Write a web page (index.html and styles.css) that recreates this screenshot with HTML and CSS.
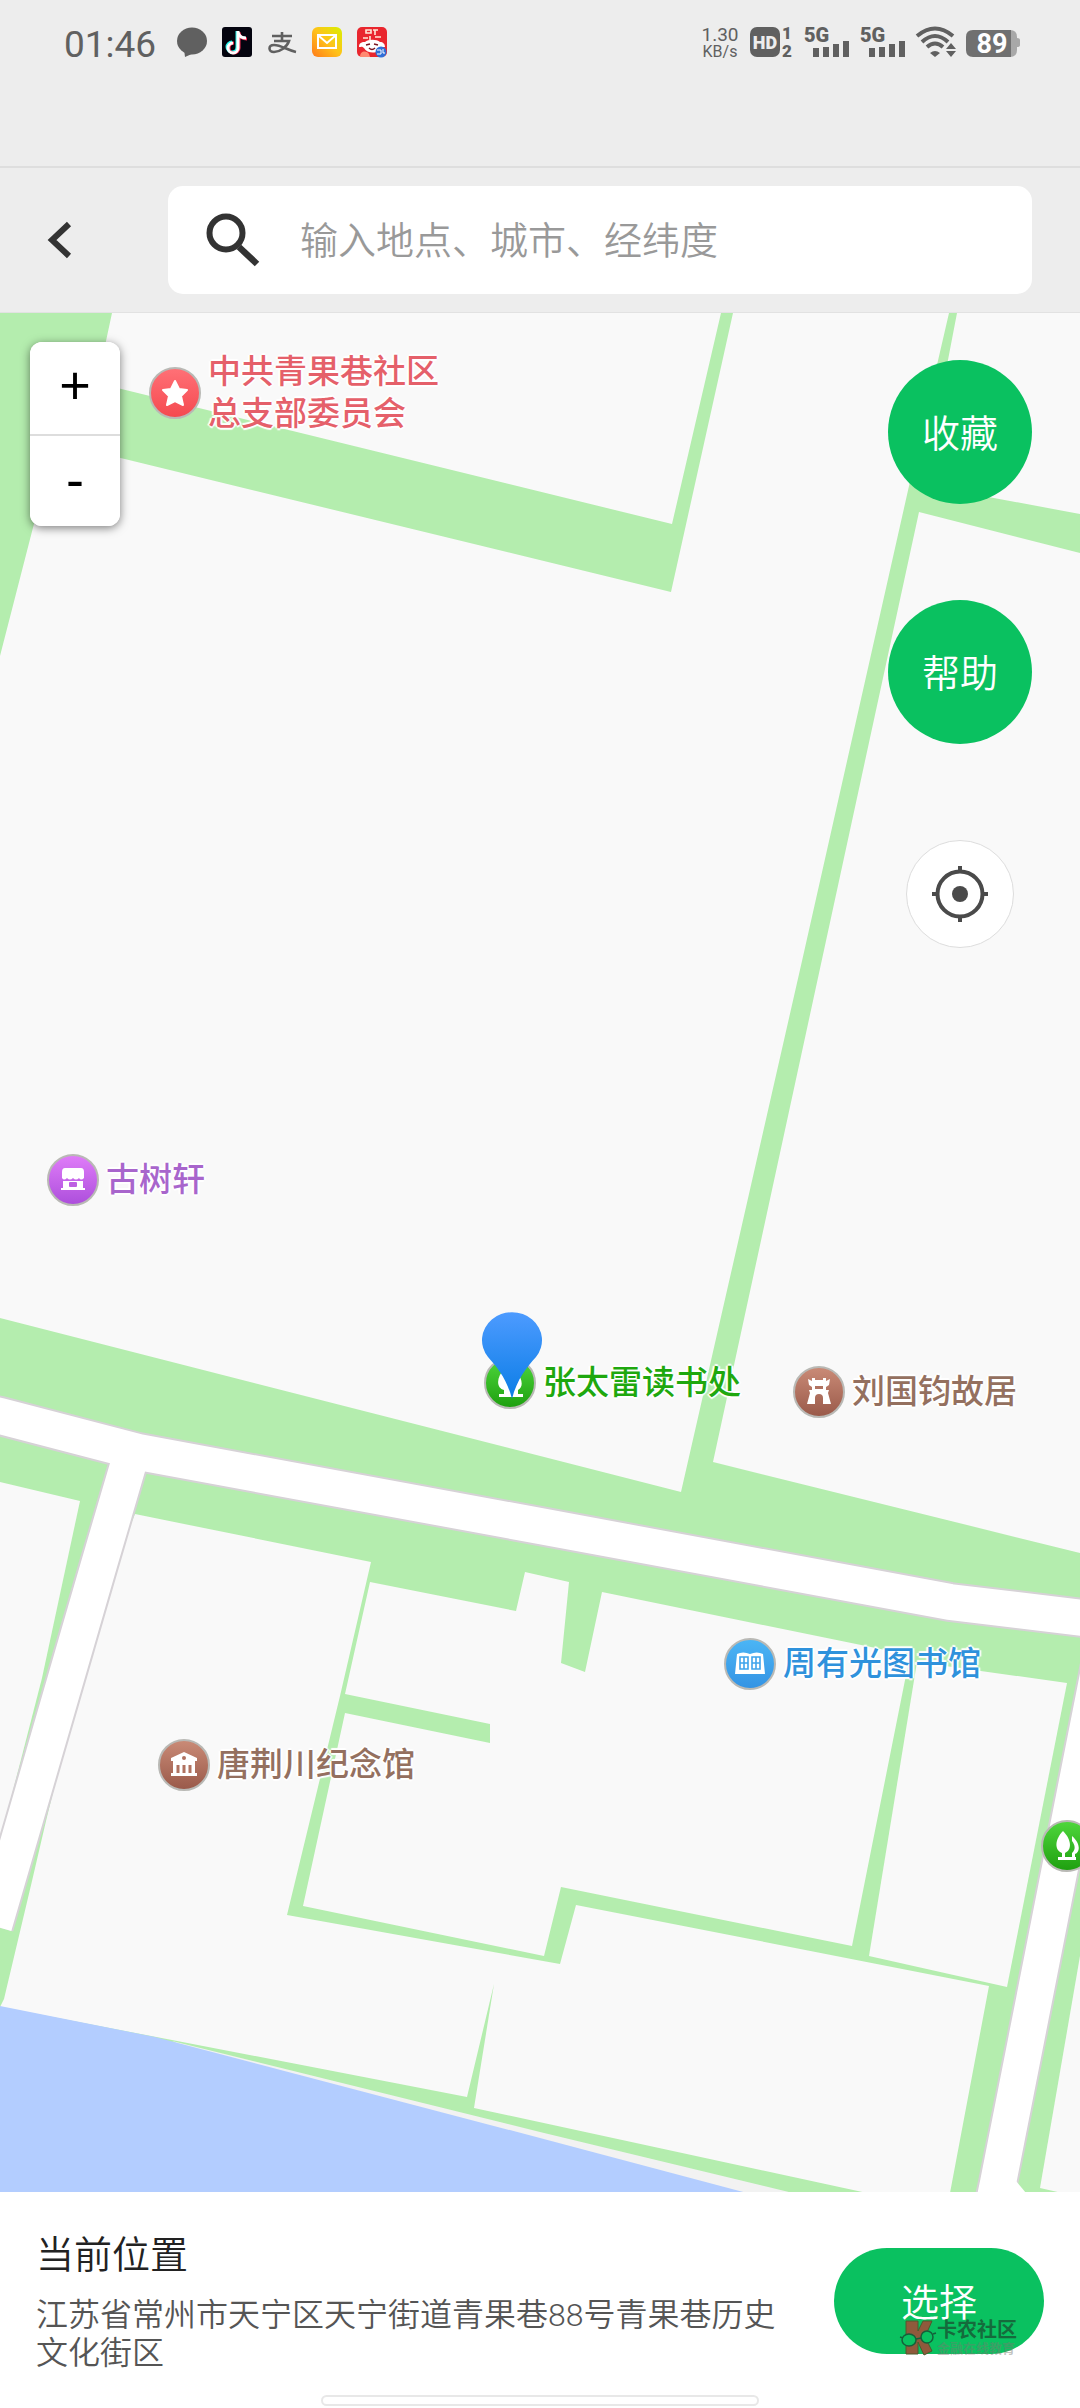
FILE: index.html
```html
<!DOCTYPE html>
<html lang="zh-CN">
<head>
    <meta charset="UTF-8">
    <meta name="viewport" content="width=device-width, initial-scale=1.0">
    <title>选择位置</title>
    <link rel="stylesheet" href="styles.css">
</head>
<body>
    <div class="status-bar">
        <span class="time">01:46</span>
        <div class="app-icons">
            <svg width="30" height="30" viewBox="0 0 30 30">
                <ellipse cx="15" cy="14" rx="15" ry="13.5" fill="#606060"/>
                <path d="M7 22l1 8 9-4z" fill="#606060"/>
            </svg>
            <svg width="30" height="30" viewBox="0 0 30 30">
                <rect width="30" height="30" rx="3" fill="#04040f"/>
                <g fill="none" stroke-width="3">
                    <path d="M15 4v16a5 5 0 1 1-5-5M15 5c1 4 4 6 8 6" stroke="#25f4ee"/>
                    <path d="M17 5v16a5 5 0 1 1-5-5M17 6c1 4 4 6 8 6" stroke="#fe2c55"/>
                    <path d="M16 4v17a5 5 0 1 1-5-5M16 5c1 4 4 6 8 6" stroke="#fff"/>
                </g>
            </svg>
            <svg width="30" height="30" viewBox="0 0 30 30">
                <path d="M5 9h20M15 5v9M7 14h15c-2 6-9 11-15 11-6 0-6-7 0-7 7 0 13 5 22 7" fill="none" stroke="#606060" stroke-width="2.6"/>
            </svg>
            <svg width="30" height="30" viewBox="0 0 30 30">
                <defs>
                    <linearGradient id="mail" x1="1" y1="0" x2="0" y2="1">
                        <stop offset="0" stop-color="#d8f000"/>
                        <stop offset=".5" stop-color="#ffc21a"/>
                        <stop offset="1" stop-color="#ff7a1a"/>
                    </linearGradient>
                </defs>
                <rect width="30" height="30" rx="6" fill="url(#mail)"/>
                <path d="M6 8h18v13H6zM7 9l8 7 8-7" fill="none" stroke="#fff" stroke-width="2"/>
            </svg>
            <svg width="30" height="30" viewBox="0 0 30 30">
                <rect width="30" height="30" rx="5" fill="#e9262e"/>
                <path d="M9 3h5v3H9zM16 3h5M18 3v5M6 11h5M13 9v4M18 10h6" stroke="#ffe9d8" stroke-width="1.6" fill="none"/>
                <path d="M2 20c0-5 4-5 6-5 3-3 12-3 15 0 3 0 5 2 5 5-3 0-3 0-4 1-2 6-14 6-17 0-2-2-3-1-5-1z" fill="#fff"/>
                <path d="M9 18l4-1M17 17l4 1M12 21q3 3 6 0" stroke="#7a1520" stroke-width="1.4" fill="none"/>
                <path d="M3 30c0-6 6-7 9-3l1 3z" fill="#ff8a72"/>
                <circle cx="24" cy="25" r="5.5" fill="#2f6fd8"/>
                <path d="M20 23h4v4h-4M26 22v4h2" stroke="#fff" stroke-width="1" fill="none"/>
            </svg>
        </div>
        <div class="system-icons">
            <div class="speed"><span class="speed-value">1.30</span><span class="speed-unit">KB/s</span></div>
            <svg width="44" height="30" viewBox="0 0 44 30">
                <rect width="30" height="30" rx="7" fill="#606060"/>
                <text class="hd" x="15" y="22">HD</text>
                <text class="sim" x="37" y="12">1</text>
                <text class="sim" x="37" y="30">2</text>
            </svg>
            <svg width="46" height="30" viewBox="0 0 46 30">
                <text class="net" x="0" y="15">5G</text>
                <path d="M12 21v9M22 20v10M32 17v13M42 14v16" stroke="#606060" stroke-width="6"/>
            </svg>
            <svg width="46" height="30" viewBox="0 0 46 30">
                <text class="net" x="0" y="15">5G</text>
                <path d="M12 21v9M22 20v10M32 17v13M42 14v16" stroke="#606060" stroke-width="6"/>
            </svg>
            <svg width="40" height="30" viewBox="0 0 40 30">
                <path d="M1 9Q19-6 37 9M6 15Q19 3 32 15M11 20Q19 13 27 20" fill="none" stroke="#606060" stroke-width="4"/>
                <path d="M14 26q5-4 10 0l-5 4zM35 16l5 6H30zM35 30l5-6H30z" fill="#606060"/>
            </svg>
            <svg width="54" height="30" viewBox="0 0 54 30">
                <path d="M40 3h4q7 0 7 7v1q3 0 3 2v5q0 2-3 2v3q0 7-7 7h-4z" fill="#a8a8a8"/>
                <path d="M7 3h38v27H7q-7 0-7-7V10q0-7 7-7z" fill="#707070"/>
                <text class="battery" x="26" y="26">89</text>
            </svg>
        </div>
    </div>

    <form class="header">
        <button class="back" type="button" aria-label="返回">
            <svg width="24" height="36" viewBox="0 0 24 36">
                <path d="M21 2L4 18l17 16" fill="none" stroke="#333" stroke-width="6"/>
            </svg>
        </button>
        <label class="search">
            <svg width="54" height="54" viewBox="0 0 54 54">
                <circle cx="20" cy="20" r="16.5" fill="none" stroke="#333" stroke-width="6"/>
                <path d="M33 34l18 17" stroke="#333" stroke-width="6.5"/>
            </svg>
            <input class="search-input" type="text" placeholder="输入地点、城市、经纬度">
        </label>
    </form>

    <main class="map">
        <!-- ground, parks, water and roads -->
        <svg class="map-ground" viewBox="0 312 1080 1880" preserveAspectRatio="xMinYMin slice">
            <g fill="#b4edae">
                <path d="M0 312H112L97 382 672 523 721 312H733L671 591 55 441 0 655z"/>
                <path d="M949 312H957L924 484 1080 513V552L919 511 713 1461 1080 1552V2192H0V1317L681 1491 736 1250 802 960 909 485z"/>
            </g>
            <g fill="#f9f9f9">
                <path d="M0 1481L80 1500 42 1677 0 1840z"/>
                <path d="M135 1513L371 1561 340 1695 287 1914 560 1963 576 1904 989 1985 950 2192H867L474 2107 494 1983 467 2096 172 2039 0 2006 4 1998 32 1880 46 1820 100 1600z"/>
                <path d="M370 1581L516 1610 525 1571 569 1581 561 1662 585 1671 602 1591 910 1654 852 1945 561 1886 544 1955 303 1905 345 1712 490 1742V1723L345 1693z"/>
                <path d="M917 1661L1067 1682 1007 1986 869 1955z"/>
                <path d="M1080 1955L1040 2187 1062 2192H1080z"/>
            </g>
            <path d="M172 2040L540 2131 793 2192H500z" fill="#f2f2f2"/>
            <path d="M0 2005L155 2036 540 2137 747 2192H0z" fill="#b3cdff"/>
            <g fill="none" stroke="#d6d2d6" stroke-width="40">
                <path d="M132 1451L100 1560-6 1925"/>
                <path d="M1109 1618L998 2182 990 2220"/>
                <path d="M-20 1410L0 1415 138 1451 540 1525 950 1601 1100 1619"/>
            </g>
            <g fill="none" stroke="#fff" stroke-width="36">
                <path d="M132 1451L100 1560-6 1925"/>
                <path d="M1109 1618L998 2182 990 2220"/>
                <path d="M-20 1410L0 1415 138 1451 540 1525 950 1601 1100 1619"/>
            </g>
            <path d="M1016 2180L1026 2192H1008z" fill="#fff"/>
        </svg>

        <div class="poi poi-committee">
            <svg class="poi-icon red" viewBox="0 0 48 48">
                <path d="M24 12l4 8 8 1-6 6 2 9-8-4-8 4 2-9-6-6 8-1z" fill="#fff" stroke="#fff" stroke-width="2" stroke-linejoin="round"/>
            </svg>
            <span>中共青果巷社区<br>总支部委员会</span>
        </div>
        <div class="poi poi-gushuxuan">
            <svg class="poi-icon purple" viewBox="0 0 48 48">
                <path d="M16 12h16q3 0 3 4v6q-3 3-5 0-3 3-6 0-3 3-6 0-3 3-5 0v-6q0-4 3-4z" fill="#fff"/>
                <path d="M14 25h20v7h2v2H12v-2h2z" fill="#fff"/>
                <rect x="20" y="26" width="8" height="5" rx="1" fill="#bd5fe2"/>
            </svg>
            <span>古树轩</span>
        </div>
        <div class="poi poi-reading">
            <svg class="poi-icon green" viewBox="0 0 48 48">
                <path d="M19 9c-9 9-9 20-1 22v4h-5v3h24v-3h-5v-4c6-3 4-12-1-17l-4 3z" fill="#fff"/>
            </svg>
            <span>张太雷读书处</span>
        </div>
        <div class="poi poi-residence">
            <svg class="poi-icon brown" viewBox="0 0 48 48">
                <path d="M13 11l4 2v-3h3v2h8v-2h3v3l4-2-1 6-3 2v3h3l-1 3 3 11h-8v-6q0-4-4-4t-4 4v6h-8l3-11-1-3h3v-3l-3-2z" fill="#fff"/>
                <path d="M20 18h8v3h-8z" fill="#b07260"/>
            </svg>
            <span>刘国钧故居</span>
        </div>
        <div class="poi poi-library">
            <svg class="poi-icon blue" viewBox="0 0 48 48">
                <path d="M11 14q6-3 13 0 7-3 13 0l2 20H9z" fill="#fff"/>
                <path d="M14 17h8v12h-8zM26 17h8v12h-8zM14 23h8M26 23h8M18 17v12M30 17v12" fill="none" stroke="#3fa4ec" stroke-width="1.6"/>
            </svg>
            <span>周有光图书馆</span>
        </div>
        <div class="poi poi-memorial">
            <svg class="poi-icon brown" viewBox="0 0 48 48">
                <path d="M24 11l13 6v3H11v-3zM13 20h22v12h2v3H11v-3h2z" fill="#fff"/>
                <path d="M18 24v8M24 24v8M30 24v8" stroke="#b07260" stroke-width="3"/>
                <circle cx="24" cy="17" r="2" fill="#b07260"/>
            </svg>
            <span>唐荆川纪念馆</span>
        </div>
        <div class="poi poi-park">
            <svg class="poi-icon green" viewBox="0 0 48 48">
                <path d="M20 9c9 9 9 19 2 22v4h11v3H15v-3h4v-4c-8-3-7-14 1-22z" fill="#fff"/>
                <path d="M29 14c9 8 8 16 3 18v4h-3v-5c4-4 3-8 0-12z" fill="#fff"/>
            </svg>
        </div>

        <svg class="marker" width="60" height="86" viewBox="0 0 60 86">
            <defs>
                <linearGradient id="pin" x1="0" y1="0" x2="0" y2="1">
                    <stop offset="0" stop-color="#4d9bff"/>
                    <stop offset="1" stop-color="#0b7de6"/>
                </linearGradient>
            </defs>
            <path d="M30 86C25 66 15 54 6 44A30 28 0 1 1 54 44C45 54 35 66 30 86z" fill="url(#pin)"/>
        </svg>

        <div class="zoom">
            <button class="zoom-btn" type="button">+</button>
            <button class="zoom-btn" type="button">-</button>
        </div>

        <div class="actions">
            <button class="action" type="button">收藏</button>
            <button class="action" type="button">帮助</button>
            <button class="locate" type="button" aria-label="定位">
                <svg width="56" height="56" viewBox="0 0 56 56">
                    <circle cx="28" cy="28" r="22.5" fill="none" stroke="#4a4a4a" stroke-width="4"/>
                    <circle cx="28" cy="28" r="8" fill="#4a4a4a"/>
                    <path d="M28 0v7M28 49v7M0 28h7M49 28h7" stroke="#4a4a4a" stroke-width="4"/>
                </svg>
            </button>
        </div>
    </main>

    <footer class="panel">
        <div class="place">
            <h1 class="place-title">当前位置</h1>
            <p class="place-address">江苏省常州市天宁区天宁街道青果巷88号青果巷历史文化街区</p>
        </div>
        <div class="select-wrap">
            <button class="select-btn" type="button">选择</button>
            <div class="watermark">
                <svg width="36" height="36" viewBox="0 0 36 36">
                    <path d="M6 1h12v10l5-10h9l-7 16 7 14-8 4-6-13v12H6z" fill="#8f5a3c" stroke="#4d5a2c"/>
                    <ellipse cx="9" cy="20" rx="7" ry="6" fill="#0ac160" stroke="#14603a" stroke-width="1.5"/>
                    <ellipse cx="27" cy="17" rx="6" ry="6" fill="#0ac160" stroke="#14603a" stroke-width="1.5"/>
                    <path d="M0 17l3 1M16 19l5-1M33 14l3-1" stroke="#14603a" stroke-width="1.5"/>
                </svg>
                <div>
                    <div class="watermark-name">卡农社区</div>
                    <div class="watermark-sub">金融在线教育</div>
                </div>
            </div>
        </div>
        <div class="home-bar"></div>
    </footer>
</body>
</html>
```
FILE: styles.css
```css
* {
    box-sizing: border-box;
}

body {
    margin: 0;
    min-height: 100vh;
    display: flex;
    flex-direction: column;
    font-family: Roboto, "Noto Sans CJK SC", sans-serif;
    font-weight: 350;
    background: #fff;
}

svg {
    display: block;
    flex: none;
    overflow: visible;
}

button {
    padding: 0;
    border: none;
    font-family: inherit;
    font-weight: inherit;
    cursor: pointer;
}

/* Status bar */
.status-bar {
    display: flex;
    align-items: flex-start;
    height: 168px;
    padding: 27px 60px 0 64px;
    background: #ededed;
    border-bottom: 2px solid #dedede;
    color: #606060;
}

.time {
    width: 113px;
    font-size: 37px;
    line-height: 36px;
    font-weight: 400;
}

.app-icons {
    display: flex;
    gap: 15px;
}

.system-icons {
    display: flex;
    gap: 10px;
    margin-left: auto;
}

.speed {
    display: flex;
    flex-direction: column;
    width: 40px;
    text-align: center;
    font-weight: 400;
}

.speed-value {
    font-size: 19px;
    line-height: 16px;
}

.speed-unit {
    font-size: 16px;
    line-height: 17px;
}

.hd,
.sim,
.net,
.battery {
    font-family: Roboto, sans-serif;
    font-weight: 900;
    fill: #606060;
}

.hd {
    font-size: 18px;
    fill: #ededed;
    text-anchor: middle;
}

.sim {
    font-size: 17px;
    text-anchor: middle;
}

.net {
    font-size: 20px;
}

.battery {
    font-size: 27px;
    font-weight: 700;
    fill: #fff;
    text-anchor: middle;
}

/* Header */
.header {
    display: flex;
    align-items: center;
    height: 144px;
    padding: 0 48px;
    background: #ededed;
}

.back {
    width: 120px;
    height: 108px;
    background: none;
}

.search {
    flex: 1;
    display: flex;
    align-items: center;
    height: 108px;
    padding: 0 38px;
    background: #fff;
    border-radius: 15px;
}

.search-input {
    flex: 1;
    min-width: 0;
    margin-left: 40px;
    padding: 2px 0 0;
    border: none;
    outline: none;
    background: none;
    font-family: inherit;
    font-size: 38px;
    font-weight: 350;
    color: #333;
}

.search-input::placeholder {
    color: #999;
}

/* Map */
.map {
    position: relative;
    flex: 1;
    min-height: 800px;
    overflow: hidden;
    background: #f9f9f9;
    border-top: 1px solid #e2e2e2;
}

.map-ground {
    position: absolute;
    width: 100%;
    height: 100%;
}

.poi {
    position: absolute;
    display: flex;
    align-items: center;
    gap: 7px;
    font-size: 33px;
    line-height: 42px;
    font-weight: 500;
    white-space: nowrap;
    text-shadow: 2px 0 1px #fff, -2px 0 1px #fff, 0 2px 1px #fff, 0 -2px 1px #fff;
}

.poi-icon {
    width: 52px;
    height: 52px;
    border: 2px solid #b9b9b5;
    border-radius: 50%;
}

.red { background: linear-gradient(#ff7076, #f54a50); }
.purple { background: linear-gradient(#df7cf8, #ad4fdc); }
.green { background: linear-gradient(#4ed63c, #1fa010); }
.brown { background: linear-gradient(#c98a76, #9a5a4a); }
.blue { background: linear-gradient(#4bb5f5, #3494e4); }

.poi-committee { left: 149px; top: 38px; color: #e5606a; }
.poi-gushuxuan { left: 47px; top: 841px; color: #a865cc; }
.poi-reading { left: 484px; top: 1044px; color: #1fa80f; }
.poi-residence { left: 793px; top: 1053px; color: #94705f; }
.poi-library { left: 724px; top: 1325px; color: #2f92dc; }
.poi-memorial { left: 158px; top: 1426px; color: #94705f; }
.poi-park { left: 1041px; top: 1507px; }

.marker {
    position: absolute;
    left: 482px;
    top: 1000px;
}

.zoom {
    position: absolute;
    left: 30px;
    top: 29px;
    width: 90px;
    border-radius: 12px;
    background: #fff;
    box-shadow: 0 2px 10px rgba(0, 0, 0, 0.5);
    overflow: hidden;
}

.zoom-btn {
    display: block;
    width: 100%;
    height: 92px;
    padding-bottom: 6px;
    background: #fff;
    color: #000;
    font-family: "Liberation Sans", sans-serif;
    font-size: 54px;
    font-weight: 400;
    line-height: 86px;
}

.zoom-btn + .zoom-btn {
    border-top: 2px solid #ddd;
}

.actions {
    position: absolute;
    right: 48px;
    top: 47px;
    display: flex;
    flex-direction: column;
    align-items: center;
    gap: 96px;
}

.action {
    width: 144px;
    height: 144px;
    padding-bottom: 4px;
    border-radius: 50%;
    background: #0ac160;
    color: #fff;
    font-size: 38px;
}

.locate {
    display: flex;
    align-items: center;
    justify-content: center;
    width: 108px;
    height: 108px;
    border: 1px solid #ddd;
    border-radius: 50%;
    background: #fff;
}

/* Bottom panel */
.panel {
    position: relative;
    display: flex;
    align-items: center;
    justify-content: space-between;
    gap: 48px;
    padding: 38px 36px 36px;
    background: #fff;
}

.place {
    flex: 1;
}

.place-title {
    margin: 0 0 16px;
    font-size: 38px;
    line-height: 50px;
    font-weight: 350;
    color: #222;
}

.place-address {
    margin: 0;
    font-size: 32px;
    line-height: 38px;
    color: #555;
}

.select-wrap {
    position: relative;
}

.select-btn {
    display: block;
    width: 210px;
    height: 106px;
    padding-bottom: 4px;
    border-radius: 53px;
    background: #0ac160;
    color: #fff;
    font-size: 38px;
}

.watermark {
    position: absolute;
    left: 66px;
    top: 72px;
    display: flex;
    gap: 1px;
    white-space: nowrap;
    pointer-events: none;
}

.watermark-name {
    font-size: 20px;
    line-height: 20px;
    font-weight: 700;
    color: #156b3c;
}

.watermark-sub {
    font-size: 13px;
    line-height: 18px;
    font-weight: 700;
    color: rgba(120, 120, 110, 0.45);
}

.home-bar {
    position: absolute;
    left: 50%;
    bottom: 2px;
    width: 438px;
    height: 11px;
    margin-left: -219px;
    border: 2px solid #e8e8e8;
    border-radius: 6px;
    background: #fff;
}
```
